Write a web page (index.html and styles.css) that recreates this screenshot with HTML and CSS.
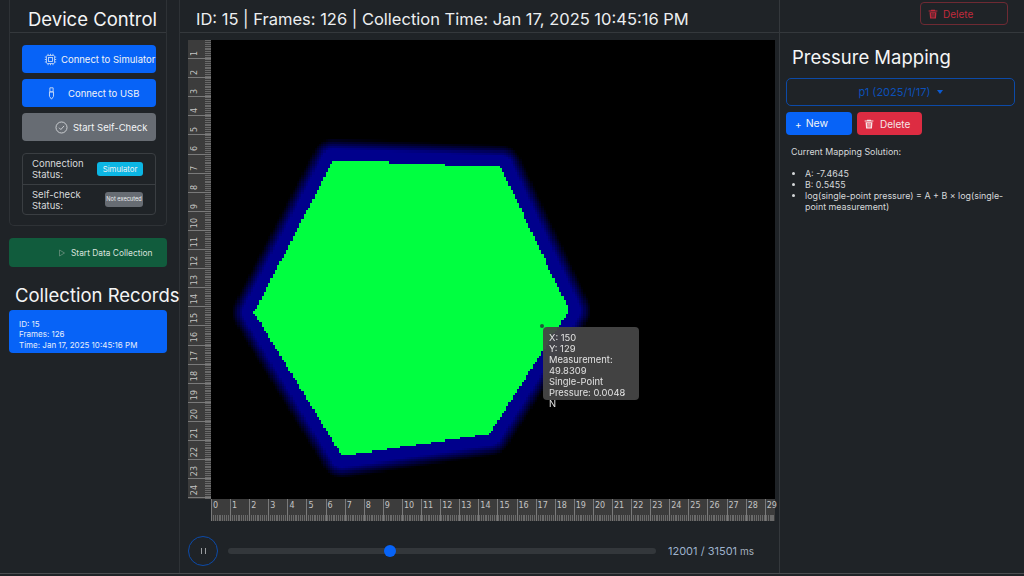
FILE: index.html
```html
<!DOCTYPE html>
<html lang="en">
<head>
    <meta charset="UTF-8">
    <meta name="viewport" content="width=device-width, initial-scale=1.0">
    <title>Device Control</title>
    <link rel="stylesheet" href="styles.css">
</head>
<body>
    <div class="app">
        <aside class="sidebar">
            <section class="device-card">
                <h2 class="device-title">Device Control</h2>
                <div class="device-body">
                    <button class="btn btn-primary btn-wide btn-right">
                        <svg class="icon" viewBox="0 0 16 16" fill="none" stroke="currentColor" stroke-width="1.1">
                            <rect x="3" y="3" width="10" height="10" rx="1.5"/>
                            <rect x="5.5" y="5.5" width="5" height="5"/>
                            <path d="M5 1v2M8 1v2M11 1v2M5 13v2M8 13v2M11 13v2M1 5h2M1 8h2M1 11h2M13 5h2M13 8h2M13 11h2"/>
                        </svg>
                        Connect to Simulator
                    </button>
                    <button class="btn btn-primary btn-wide btn-usb">
                        <svg class="icon" viewBox="0 0 16 16" fill="none" stroke="currentColor" stroke-width="1.2">
                            <path d="M6 1h4v5H6zM5.5 6h5v5.5L8 15l-2.500-3.500z"/>
                        </svg>
                        Connect to USB
                    </button>
                    <button class="btn btn-secondary btn-wide btn-check">
                        <svg class="icon" viewBox="0 0 16 16" fill="none" stroke="currentColor" stroke-width="1.1">
                            <circle cx="8" cy="8" r="6.800"/>
                            <path d="M5 8.300l2.200 2.200L11.200 6"/>
                        </svg>
                        Start Self-Check
                    </button>
                    <div class="status-list">
                        <div class="status-row">
                            <span>Connection Status:</span>
                            <span class="badge badge-info">Simulator</span>
                        </div>
                        <div class="status-row">
                            <span>Self-check Status:</span>
                            <span class="badge badge-muted">Not executed</span>
                        </div>
                    </div>
                </div>
            </section>
            <button class="btn btn-collect">
                <svg class="icon-play" viewBox="0 0 16 16" fill="none" stroke="currentColor" stroke-width="1.300">
                    <path d="M3 2l10 6-10 6z"/>
                </svg>
                Start Data Collection
            </button>
            <h2 class="records-title">Collection Records</h2>
            <div class="record-item">
                <div>ID: 15</div>
                <div>Frames: 126</div>
                <div class="record-time">Time: Jan 17, 2025 10:45:16 PM</div>
            </div>
        </aside>

        <main class="main">
            <header class="topbar">
                <h1>ID: 15 | Frames: 126 | Collection Time: Jan 17, 2025 10:45:16 PM</h1>
            </header>
            <div class="viewer">
                <div class="ruler-y" id="rulerY"></div>
                <div class="heatmap">
                    <canvas id="heatmap" width="256" height="208"></canvas>
                    <span class="cursor-dot"></span>
                    <div class="tooltip">
                        X: 150<br>Y: 129<br>Measurement:<br>49.8309<br>Single-Point<br>Pressure: 0.0048 N
                    </div>
                </div>
                <div class="ruler-corner"></div>
                <div class="ruler-x" id="rulerX"></div>
            </div>
            <div class="player">
                <button class="play-btn" aria-label="Pause"><span class="pause-icon"></span></button>
                <div class="track"><span class="thumb"></span></div>
                <div class="time"><span class="time-val">12001 / 31501</span> ms</div>
            </div>
        </main>

        <aside class="panel">
            <div class="panel-top">
                <button class="btn btn-outline-danger">
                    <svg class="icon-trash" viewBox="0 0 16 16" fill="currentColor"><path d="M5 1h6l.5 1.500H15V4H1V2.500h3.500zM2.500 5h11l-.8 10H3.300zM5.500 6.500l.3 7h1l-.3-7zM7.500 6.500v7h1v-7zM9.500 6.500l-.3 7h1l.3-7z"/></svg>
                    Delete
                </button>
            </div>
            <div class="panel-body">
                <h2 class="panel-title">Pressure Mapping</h2>
                <button class="select-btn">p1 (2025/1/17)<span class="caret"></span></button>
                <div class="panel-actions">
                    <button class="btn btn-primary btn-new"><span class="plus">+</span> New</button>
                    <button class="btn btn-danger">
                        <svg class="icon-trash" viewBox="0 0 16 16" fill="currentColor"><path d="M5 1h6l.5 1.500H15V4H1V2.500h3.500zM2.500 5h11l-.8 10H3.300zM5.500 6.500l.3 7h1l-.3-7zM7.500 6.500v7h1v-7zM9.500 6.500l-.3 7h1l.3-7z"/></svg>
                        Delete
                    </button>
                </div>
                <div class="solution">
                    <p>Current Mapping Solution:</p>
                    <ul>
                        <li>A: -7.4645</li>
                        <li>B: 0.5455</li>
                        <li>log(single-point pressure) = A + B × log(single-point measurement)</li>
                    </ul>
                </div>
            </div>
        </aside>
    </div>
    <script src="script.js"></script>
</body>
</html>
```

FILE: styles.css
```css
* {
    margin: 0;
    padding: 0;
    box-sizing: border-box;
    font-family: Inter, 'Noto Sans', sans-serif;
}

body {
    background: #1f2327;
    color: #e6e8ea;
    width: 1024px;
    height: 576px;
    overflow: hidden;
}

.app {
    display: grid;
    grid-template-columns: 180px 599px 245px;
    height: 574px;
    border-bottom: 1px solid #4a4d50;
}

button {
    border: none;
    cursor: pointer;
}

/* left column */
.sidebar {
    display: flex;
    flex-direction: column;
    padding: 0 12px 0 9px;
    border-right: 1px solid #2e3236;
}

.device-card {
    border: 1px solid #2e3236;
    border-top: none;
    border-radius: 0 0 5px 5px;
    height: 226px;
}

.device-title {
    height: 33px;
    font-size: 18.500px;
    font-weight: 400;
    color: #f4f5f6;
    text-align: right;
    padding: 8px 9px 0 0;
    line-height: 23px;
    border-bottom: 1px solid #34383c;
}

.device-body {
    display: flex;
    flex-direction: column;
    padding: 12px 11px 0 12px;
}

.btn {
    display: flex;
    align-items: center;
    border-radius: 4px;
    color: #f2f4f6;
    font-size: 9.500px;
}

.btn-wide {
    width: 134px;
    height: 28px;
    margin-bottom: 6px;
}

.btn-right {
    padding-left: 22px;
    gap: 4px;
}

.btn-usb {
    padding-left: 23px;
    gap: 10px;
}

.btn-check {
    padding-left: 33px;
    gap: 5px;
    margin-bottom: 12px;
}

.btn-primary {
    background: #0763f7;
}

.btn-secondary {
    background: #676c73;
}

.icon {
    width: 13px;
    height: 13px;
    opacity: 0.8;
}

.btn-usb .icon {
    margin-left: 0;
}

.status-list {
    border: 1px solid #3a3e42;
    border-radius: 4px;
    width: 134px;
    height: 62px;
}

.status-row {
    display: flex;
    align-items: center;
    justify-content: space-between;
    height: 30px;
    padding: 0 12px 0 9px;
    font-size: 9.500px;
    line-height: 11px;
    color: #d8dadc;
}

.status-row span:first-child {
    width: 62px;
}

.status-row + .status-row {
    border-top: 1px solid #3a3e42;
}

.badge {
    display: flex;
    align-items: center;
    justify-content: center;
    border-radius: 3px;
    color: #eef0f2;
}

.badge-info {
    width: 46px;
    height: 14px;
    background: #0cb6e4;
    font-size: 7.800px;
}

.badge-muted {
    width: 38px;
    height: 15px;
    background: #676c73;
    font-size: 5.600px;
}

.btn-collect {
    margin-top: 12px;
    width: 158px;
    height: 29px;
    background: #115c3d;
    color: #d8e2dd;
    font-size: 8.400px;
    padding-left: 49px;
    gap: 5px;
}

.icon-play {
    width: 8px;
    height: 8px;
    color: #7f9a8d;
}

.records-title {
    margin-top: 17px;
    padding-left: 6px;
    font-size: 18.500px;
    font-weight: 400;
    line-height: 23px;
    white-space: nowrap;
    color: #f4f5f6;
}

.record-item {
    margin-top: 3px;
    width: 158px;
    height: 43px;
    padding: 9px 10px 0;
    border-radius: 4px;
    background: #0763f7;
    color: #e8eefa;
    font-size: 8px;
    line-height: 10px;
}

.record-time {
    margin-top: 1px;
}

/* middle column */
.main {
    display: flex;
    flex-direction: column;
}

.topbar {
    height: 33px;
    padding: 8px 0 0 16px;
    border-bottom: 1px solid #34383c;
}

.topbar h1 {
    font-size: 16.500px;
    font-weight: 400;
    line-height: 23px;
    color: #eceef0;
    white-space: nowrap;
}

.viewer {
    display: grid;
    grid-template-columns: 23px 564px;
    grid-template-rows: 459px 22px;
    margin: 7px 0 0 8px;
}

.ruler-y {
    display: flex;
    flex-direction: column;
    background:
        repeating-linear-gradient(to bottom, #6a6a6a 0 1px, transparent 1px 1.900px) right top / 6px 100% no-repeat,
        #3c3c3c;
}

.ruler-y span {
    flex: none;
    height: 19.100px;
    border-bottom: 1px solid #7a7a7a;
    position: relative;
}

.ruler-y b {
    position: absolute;
    left: 1px;
    bottom: 2px;
    width: 12px;
    font-weight: 400;
    font-size: 8px;
    line-height: 12px;
    color: #c4c4c4;
    font-family: 'DejaVu Sans', sans-serif;
    writing-mode: vertical-rl;
    transform: rotate(180deg);
    text-align: left;
}

.ruler-x {
    display: flex;
    background:
        repeating-linear-gradient(to right, #6a6a6a 0 1px, transparent 1px 1.900px) left bottom / 100% 6px no-repeat,
        #3c3c3c;
}

.ruler-x span {
    flex: none;
    width: 19.100px;
    border-left: 1px solid #7a7a7a;
    padding: 1px 0 0 1px;
    font-size: 8px;
    line-height: 12px;
    color: #c4c4c4;
    font-family: 'DejaVu Sans', sans-serif;
}

.heatmap {
    position: relative;
    background: #000;
}

.heatmap canvas {
    display: block;
    width: 564px;
    height: 459px;
    image-rendering: pixelated;
}

.cursor-dot {
    position: absolute;
    left: 329px;
    top: 284px;
    width: 4px;
    height: 4px;
    border-radius: 50%;
    background: #1e5a3a;
}

.tooltip {
    position: absolute;
    left: 332px;
    top: 287px;
    width: 96px;
    height: 73px;
    padding: 5px 6px;
    border-radius: 4px;
    background: rgba(70, 70, 70, 0.95);
    color: #e2e2e2;
    font-size: 9.400px;
    line-height: 11px;
}

.player {
    display: flex;
    align-items: center;
    margin-top: 15px;
    padding-left: 8px;
}

.play-btn {
    display: flex;
    align-items: center;
    justify-content: center;
    width: 30px;
    height: 30px;
    border: 1px solid #0c4aa8;
    border-radius: 50%;
    background: transparent;
}

.pause-icon {
    width: 5px;
    height: 6px;
    border-left: 1.500px solid #9a9da0;
    border-right: 1.500px solid #9a9da0;
}

.track {
    position: relative;
    width: 428px;
    height: 6px;
    margin-left: 10px;
    border-radius: 3px;
    background: #33373b;
}

.thumb {
    position: absolute;
    left: 156px;
    top: -3px;
    width: 12px;
    height: 12px;
    border-radius: 50%;
    background: #0763f7;
}

.time {
    margin-left: 12px;
    font-size: 10px;
    color: #a6b0bc;
    white-space: nowrap;
}

.time-val {
    font-size: 11px;
    color: #9db2cc;
}

/* right column */
.panel {
    border-left: 1px solid #34383c;
}

.panel-top {
    display: flex;
    justify-content: flex-end;
    height: 33px;
    padding: 2px 16px 0 0;
    border-bottom: 1px solid #34383c;
}

.btn-outline-danger {
    width: 88px;
    height: 23px;
    padding-left: 7px;
    gap: 5px;
    border: 1px solid #6e2a33;
    background: transparent;
    color: #c22a3c;
    font-size: 10px;
}

.icon-trash {
    width: 10px;
    height: 10px;
}

.panel-body {
    padding: 0 9px 0 6px;
}

.panel-title {
    margin-top: 12px;
    padding-left: 6px;
    font-size: 18.500px;
    font-weight: 400;
    line-height: 24px;
    color: #f4f5f6;
}

.select-btn {
    display: flex;
    align-items: center;
    justify-content: center;
    gap: 6px;
    width: 229px;
    height: 28px;
    margin-top: 9px;
    border: 1px solid #0c4aa8;
    border-radius: 5px;
    background: transparent;
    color: #0c50b8;
    font-size: 11px;
}

.caret {
    border-top: 4px solid #0c5ad0;
    border-left: 3.500px solid transparent;
    border-right: 3.500px solid transparent;
}

.panel-actions {
    display: flex;
    gap: 5px;
    margin-top: 6px;
}

.btn-new {
    width: 66px;
    height: 23px;
    padding-left: 9px;
    gap: 4px;
    font-size: 10.500px;
}

.plus {
    font-size: 10px;
}

.btn-danger {
    width: 65px;
    height: 23px;
    padding-left: 7px;
    gap: 6px;
    background: #dd2c42;
    color: #f5e6e8;
    font-size: 10px;
}

.solution {
    margin-top: 11px;
    padding-left: 5px;
    font-size: 8.900px;
    line-height: 11px;
    color: #d6d8da;
}

.solution ul {
    margin-top: 11px;
    padding-left: 14px;
}
```

FILE: script.js
```js
// rulers
const rulerY = document.getElementById('rulerY');
for (let i = 1; i <= 24; i++) {
    const tick = document.createElement('span');
    const label = document.createElement('b');
    label.textContent = i;
    tick.appendChild(label);
    rulerY.appendChild(tick);
}

const rulerX = document.getElementById('rulerX');
for (let i = 0; i <= 29; i++) {
    const tick = document.createElement('span');
    tick.textContent = i;
    rulerX.appendChild(tick);
}

// heatmap, one canvas pixel per sensor point
const hexagon = [[55, 54], [131, 57], [162, 122], [126, 178], [59, 188], [19, 123]];

function distanceToEdge(px, py, a, b) {
    const dx = b[0] - a[0];
    const dy = b[1] - a[1];
    let t = ((px - a[0]) * dx + (py - a[1]) * dy) / (dx * dx + dy * dy);
    t = Math.max(0, Math.min(1, t));
    return Math.hypot(px - a[0] - t * dx, py - a[1] - t * dy);
}

function isInside(px, py) {
    let inside = false;
    for (let i = 0, j = hexagon.length - 1; i < hexagon.length; j = i++) {
        const a = hexagon[i];
        const b = hexagon[j];
        if ((a[1] > py) !== (b[1] > py) && px < (b[0] - a[0]) * (py - a[1]) / (b[1] - a[1]) + a[0]) {
            inside = !inside;
        }
    }
    return inside;
}

const ctx = document.getElementById('heatmap').getContext('2d');
ctx.fillStyle = '#000';
ctx.fillRect(0, 0, 256, 208);
for (let y = 0; y < 208; y++) {
    for (let x = 0; x < 256; x++) {
        if (isInside(x, y)) {
            ctx.fillStyle = '#00ff40';
        } else {
            let d = Infinity;
            hexagon.forEach((p, i) => {
                d = Math.min(d, distanceToEdge(x, y, p, hexagon[(i + 1) % hexagon.length]));
            });
            if (d > 10) continue;
            const blue = d < 5 ? 140 : Math.round(140 * (10 - d) / 5);
            ctx.fillStyle = `rgb(0, 0, ${blue})`;
        }
        ctx.fillRect(x, y, 1, 1);
    }
}
```
